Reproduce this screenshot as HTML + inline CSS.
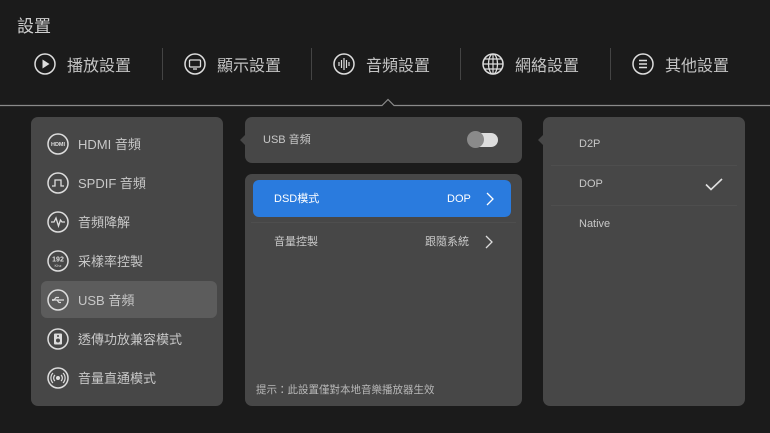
<!DOCTYPE html>
<html><head><meta charset="utf-8"><style>
*{margin:0;padding:0;box-sizing:border-box}
body{width:770px;height:433px;background:#1b1b1b;font-family:"Liberation Sans","Noto Sans CJK TC",sans-serif;color:#c8c8c8;position:relative;overflow:hidden}
.abs{position:absolute}
.title{left:17px;top:12px;font-size:17px;color:#cfcfcf}
.tab{top:52px;height:24px;display:flex;align-items:center;font-size:16px;color:#c4c4c4}
.tab svg{margin-right:11px}
.sep{top:48px;width:1px;height:32px;background:#444}
.panel{background:#474747;border-radius:7px}
.li{position:absolute;left:10px;width:176px;height:37px;display:flex;align-items:center;font-size:13px;color:#c8c8c8;border-radius:6px}
.li svg{margin-left:6px;margin-right:9px}
.sel{background:#5c5c5c}
.r{position:absolute;left:36px;font-size:11px;line-height:14px;color:#c8c8c8}
.div{position:absolute;height:1px;background:#4e4e4e}
.t{position:absolute;font-size:11px;line-height:14px;white-space:nowrap}
</style></head><body>
<div class="abs title">設置</div>

<div class="abs tab" style="left:34px"><svg width="22" height="22" viewBox="0 0 22 22"><circle cx="11" cy="11" r="10" fill="none" stroke="#ddd" stroke-width="1.5"/><path d="M8.5 6.5v9l7-4.5z" fill="#ddd"/></svg>播放設置</div>
<div class="abs sep" style="left:162px"></div>
<div class="abs tab" style="left:184px"><svg width="22" height="22" viewBox="0 0 22 22"><circle cx="11" cy="11" r="10" fill="none" stroke="#ddd" stroke-width="1.5"/><rect x="5.5" y="7" width="11" height="7" rx="1" fill="none" stroke="#ddd" stroke-width="1.3"/><path d="M9 16h4" stroke="#ddd" stroke-width="1.3"/></svg>顯示設置</div>
<div class="abs sep" style="left:311px"></div>
<div class="abs tab" style="left:333px"><svg width="22" height="22" viewBox="0 0 22 22"><circle cx="11" cy="11" r="10" fill="none" stroke="#ddd" stroke-width="1.5"/><path d="M6 9v4M8.5 7v8M11 5v12M13.5 7v8M16 9v4" stroke="#ddd" stroke-width="1.2"/></svg>音頻設置</div>
<div class="abs sep" style="left:460px"></div>
<div class="abs tab" style="left:482px"><svg width="22" height="22" viewBox="0 0 22 22"><circle cx="11" cy="11" r="10" fill="none" stroke="#ddd" stroke-width="1.5"/><ellipse cx="11" cy="11" rx="4.5" ry="10" fill="none" stroke="#ddd" stroke-width="1.2"/><path d="M11 1v20M1 11h20M2.5 6h17M2.5 16h17" stroke="#ddd" stroke-width="1.2"/></svg>網絡設置</div>
<div class="abs sep" style="left:610px"></div>
<div class="abs tab" style="left:632px"><svg width="22" height="22" viewBox="0 0 22 22"><circle cx="11" cy="11" r="10" fill="none" stroke="#ddd" stroke-width="1.5"/><path d="M7 7.5h8M7 11h8M7 14.5h8" stroke="#ddd" stroke-width="1.5"/></svg>其他設置</div>

<svg class="abs" style="left:0;top:96px" width="770" height="12"><path d="M0 9.5H382L388 3.5L394 9.5H770" fill="none" stroke="#8a8a8a" stroke-width="1.2"/></svg>

<div class="abs panel" style="left:31px;top:117px;width:192px;height:289px">
 <div class="li" style="top:8px"><svg width="22" height="22" viewBox="0 0 22 22"><circle cx="11" cy="11" r="10" fill="none" stroke="#ddd" stroke-width="1.5"/><text x="11" y="13" font-size="5.5" fill="#ddd" text-anchor="middle" font-family="Liberation Sans" font-weight="bold">HDMI</text></svg>HDMI 音頻</div>
 <div class="li" style="top:47px"><svg width="22" height="22" viewBox="0 0 22 22"><circle cx="11" cy="11" r="10" fill="none" stroke="#ddd" stroke-width="1.5"/><path d="M5 14h3V8h6v6h3" fill="none" stroke="#ddd" stroke-width="1.3"/></svg>SPDIF 音頻</div>
 <div class="li" style="top:86px"><svg width="22" height="22" viewBox="0 0 22 22"><circle cx="11" cy="11" r="10" fill="none" stroke="#ddd" stroke-width="1.5"/><path d="M4 11h3l2-4 2.5 8 2-6 1.5 2h3" fill="none" stroke="#ddd" stroke-width="1.3"/></svg>音頻降解</div>
 <div class="li" style="top:125px"><svg width="22" height="22" viewBox="0 0 22 22"><circle cx="11" cy="11" r="10" fill="none" stroke="#ddd" stroke-width="1.5"/><text x="11" y="11.5" font-size="7" fill="#ddd" text-anchor="middle" font-family="Liberation Sans" font-weight="bold">192</text><text x="11" y="17" font-size="4" fill="#ddd" text-anchor="middle" font-family="Liberation Sans">Khz</text></svg>采樣率控製</div>
 <div class="li sel" style="top:164px"><svg width="22" height="22" viewBox="0 0 22 22"><circle cx="11" cy="11" r="10" fill="none" stroke="#ddd" stroke-width="1.5"/><path d="M5 11h12M7 11l2-2.5h3M10 11l2 2.5h2" fill="none" stroke="#ddd" stroke-width="1.2"/><circle cx="6" cy="11" r="1" fill="#ddd"/></svg>USB 音頻</div>
 <div class="li" style="top:203px"><svg width="22" height="22" viewBox="0 0 22 22"><circle cx="11" cy="11" r="10" fill="none" stroke="#ddd" stroke-width="1.5"/><rect x="7" y="5.5" width="8" height="11" rx="1" fill="#ddd"/><circle cx="11" cy="12.5" r="2" fill="#474747"/><circle cx="11" cy="8" r="1" fill="#474747"/></svg>透傳功放兼容模式</div>
 <div class="li" style="top:242px"><svg width="22" height="22" viewBox="0 0 22 22"><circle cx="11" cy="11" r="10" fill="none" stroke="#ddd" stroke-width="1.5"/><circle cx="11" cy="11" r="2" fill="#ddd"/><path d="M8 8a4 4 0 0 0 0 6M14 8a4 4 0 0 1 0 6M6 6a7 7 0 0 0 0 10M16 6a7 7 0 0 1 0 10" fill="none" stroke="#ddd" stroke-width="1.2"/></svg>音量直通模式</div>
</div>

<div class="abs panel" style="left:245px;top:117px;width:277px;height:46px">
 <div class="t" style="left:18px;top:16px;color:#c8c8c8">USB 音頻</div>
 <div class="abs" style="left:223px;top:16px;width:30px;height:14px;border-radius:7px;background:#ddd"></div>
 <div class="abs" style="left:222px;top:14px;width:17px;height:17px;border-radius:50%;background:#8a8a8a"></div>
</div>
<svg class="abs" style="left:239px;top:134px" width="7" height="12"><path d="M7 0L1 6L7 12z" fill="#474747"/></svg>

<div class="abs panel" style="left:245px;top:174px;width:277px;height:232px">
 <div class="abs" style="left:8px;top:6px;width:258px;height:37px;background:#2a7bde;border-radius:6px;color:#fff">
  <span class="t" style="left:21px;top:12px">DSD模式</span>
  <span class="t" style="left:194px;top:12px">DOP</span>
  <svg class="abs" style="left:233px;top:12px" width="8" height="14"><path d="M1 1l6 6-6 6" fill="none" stroke="#fff" stroke-width="1.3"/></svg>
 </div>
 <div class="div" style="left:6px;top:48px;width:265px"></div>
 <span class="t" style="left:29px;top:61px;color:#c8c8c8">音量控製</span>
 <span class="t" style="left:180px;top:61px;color:#c8c8c8">跟隨系統</span>
 <svg class="abs" style="left:240px;top:61px" width="8" height="14"><path d="M1 1l6 6-6 6" fill="none" stroke="#ddd" stroke-width="1.3"/></svg>
 <span class="t" style="left:11px;top:209px;font-size:10.5px;color:#b8b8b8">提示：此設置僅對本地音樂播放器生效</span>
</div>

<div class="abs panel" style="left:543px;top:117px;width:202px;height:289px">
 <span class="r" style="top:20px">D2P</span>
 <div class="div" style="left:8px;top:48px;width:186px"></div>
 <span class="r" style="top:60px">DOP</span>
 <svg class="abs" style="left:162px;top:61px" width="18" height="13"><path d="M1 6.5l5 5L17 1" fill="none" stroke="#e0e0e0" stroke-width="1.6"/></svg>
 <div class="div" style="left:8px;top:88px;width:186px"></div>
 <span class="r" style="top:100px">Native</span>
</div>
<svg class="abs" style="left:537px;top:134px" width="7" height="12"><path d="M7 0L1 6L7 12z" fill="#474747"/></svg>
</body></html>
